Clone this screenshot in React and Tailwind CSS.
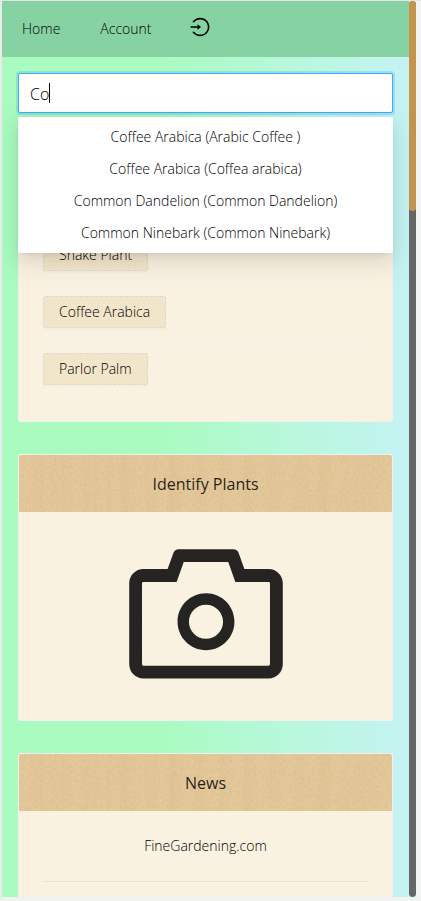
import { useState } from "react";
import { AiOutlineCamera, AiOutlineLogin } from "react-icons/ai";

const suggestions = [
  "Coffee Arabica (Arabic Coffee )",
  "Coffee Arabica (Coffea arabica)",
  "Common Dandelion (Common Dandelion)",
  "Common Ninebark (Common Ninebark)",
];

const plants = ["Snake Plant", "Coffee Arabica", "Parlor Palm"];

function WoodGrain({ id }) {
  return (
    <svg className="absolute inset-0 h-full w-full" aria-hidden="true">
      <filter id={id + "-grain"} x="0" y="0" width="100%" height="100%">
        <feTurbulence type="fractalNoise" baseFrequency="0.5 0.35" numOctaves="2" seed="4" />
        <feColorMatrix values="0 0 0 0 0.5  0 0 0 0 0.34  0 0 0 0 0.14  0.4 0 0 0 -0.15" />
      </filter>
      <filter id={id + "-bands"} x="0" y="0" width="100%" height="100%">
        <feTurbulence type="fractalNoise" baseFrequency="0.08 0.003" numOctaves="2" seed="9" />
        <feColorMatrix values="0 0 0 0 0.5  0 0 0 0 0.34  0 0 0 0 0.14  0.2 0 0 0 -0.08" />
      </filter>
      <rect width="100%" height="100%" filter={`url(#${id}-grain)`} />
      <rect width="100%" height="100%" filter={`url(#${id}-bands)`} />
    </svg>
  );
}

function Card({ id, title, children }) {
  return (
    <section className="rounded-xs border border-[#f0f0f0] bg-[#faf2e0]">
      <header className="relative min-h-[57px] overflow-hidden rounded-t-xs bg-[#e5c89b] px-6 pt-[17px] pb-4 text-center">
        <WoodGrain id={id} />
        {title && <h2 className="relative text-base leading-6 font-medium text-black/85">{title}</h2>}
      </header>
      {children}
    </section>
  );
}

export default function App() {
  const [query, setQuery] = useState("Co");
  return (
    <div className="flex h-screen border-t border-b-4 border-l-2 border-t-[#e3e5e4] border-b-[#f1f3f2] border-l-[#e9ebea] bg-[#f3f4f4] pr-[5px] font-['Open_Sans','Noto_Sans',sans-serif] text-sm leading-[22px] font-light text-black">
      <div className="min-w-0 flex-1 overflow-hidden bg-linear-to-r from-[#a9fbc0] from-38% to-[#c4f3f3]">
        <nav className="flex h-14 items-center gap-10 bg-[#86d2a3] pl-5">
          <a href="#home">Home</a>
          <a href="#account">Account</a>
          <a href="#login" aria-label="Log in" className="-ml-0.5 pb-1">
            <AiOutlineLogin size={22} />
          </a>
        </nav>

        <main className="flex flex-col gap-8 p-4">
          <div className="relative">
            <input
              type="text"
              aria-label="Search plants"
              value={query}
              onChange={(e) => setQuery(e.target.value)}
              className="block h-10 w-full rounded-xs border border-[#40a9ff] bg-white px-[11px] pt-0.5 text-base font-light caret-transparent shadow-[0_0_0_2px_rgba(24,144,255,0.2)] outline-none"
            />
            <div className="pointer-events-none absolute inset-y-0 left-3 flex items-center text-base" aria-hidden="true">
              <span className="invisible">{query}</span>
              <span className="h-5 w-px bg-black" />
            </div>
            <ul className="absolute inset-x-0 top-11 z-10 rounded-xs bg-white py-1 text-center shadow-[0_3px_6px_-4px_rgba(0,0,0,0.12),0_6px_16px_0_rgba(0,0,0,0.08),0_9px_28px_8px_rgba(0,0,0,0.05)]">
              {suggestions.map((name) => (
                <li key={name}>
                  <button type="button" className="block w-full px-3 py-[5px]">
                    {name}
                  </button>
                </li>
              ))}
            </ul>
          </div>

          <Card id="plants">
            <ul className="divide-y divide-[#f0f0f0] p-6">
              {plants.map((name) => (
                <li key={name} className="py-3">
                  <button
                    type="button"
                    className="block h-8 rounded-xs border border-dashed border-[#d9d9d9] bg-[#f2e6ca] px-[15px] shadow-[0_2px_0_rgba(0,0,0,0.016)]"
                  >
                    {name}
                  </button>
                </li>
              ))}
            </ul>
          </Card>

          <Card id="identify" title="Identify Plants">
            <div className="flex justify-center py-[13px]">
              <button type="button" aria-label="Identify a plant" className="text-[#262423]">
                <AiOutlineCamera size={182} />
              </button>
            </div>
          </Card>

          <Card id="news" title="News">
            <div className="p-6 text-center">
              <a href="#finegardening">FineGardening.com</a>
              <hr className="my-6 border-black/6" />
            </div>
          </Card>
        </main>
      </div>

      <div className="w-[7px] rounded-full bg-[#666666]">
        <div className="h-[210px] rounded-full bg-[#c4944f]" />
      </div>
    </div>
  );
}
